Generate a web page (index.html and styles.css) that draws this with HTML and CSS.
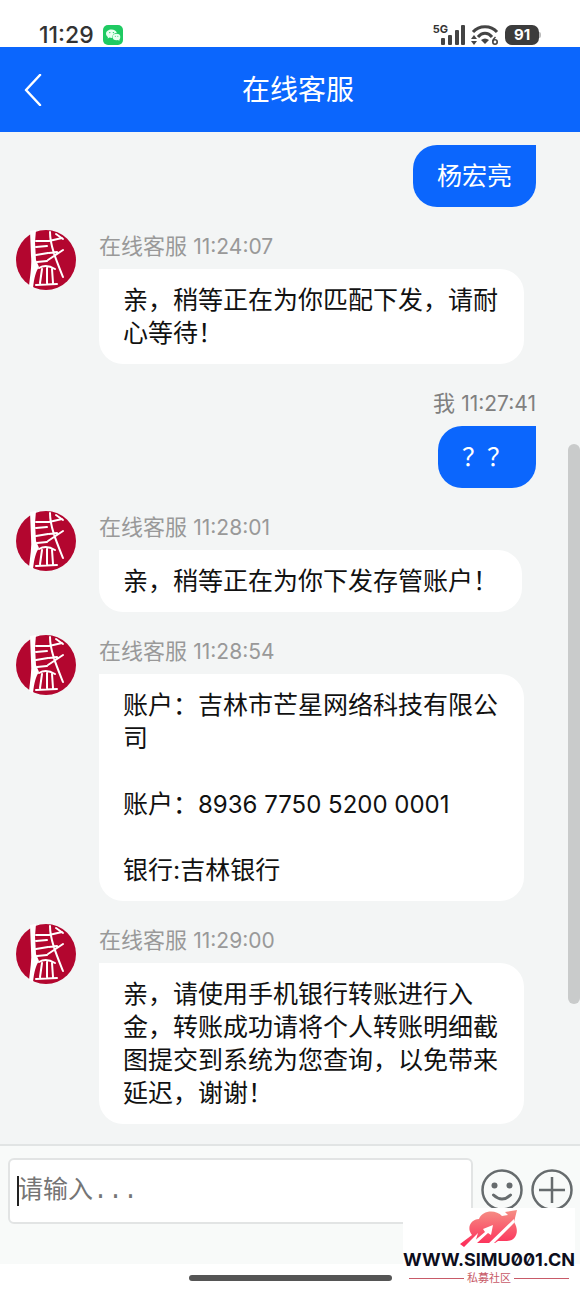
FILE: index.html
```html
<!DOCTYPE html>
<html lang="zh-CN">
<head>
<meta charset="utf-8">
<meta name="viewport" content="width=device-width, initial-scale=1">
<title>在线客服</title>
<link rel="stylesheet" href="styles.css">
</head>
<body>
<svg class="defs" aria-hidden="true">
  <symbol id="seal" viewBox="0 0 60 60">
    <circle cx="30" cy="30" r="30" fill="#b3062f"/>
    <g fill="none" stroke="#fff" stroke-linecap="round" stroke-linejoin="round">
      <path fill="#fff" stroke="none" d="M14 1L20 0L19 12L20 30L23 37C20 41 18 48 17 58L13 56C14 46 16 36 15 26Z"/>
      <path stroke-width="2" d="M20 11L33 11L46 8M40 4L47 9"/>
      <path stroke-width="2" d="M20 17L31 16M20 25L32 23M21 32L31 31"/>
      <path stroke-width="2" d="M34 2C34 16 41 32 47 47M47 20L32 30M33 23L41 22"/>
      <path stroke-width="2" d="M23 38C28 35 34 36 39 39M26 39L24 53M31 38L31 53M36 39L37 53M20 55L41 54"/>
    </g>
  </symbol>
</svg>

<header class="status">
  <time class="clock">11:29</time>
  <svg class="wechat" viewBox="0 0 20 20" aria-hidden="true">
    <rect width="20" height="20" rx="5" fill="#1fca62"/>
    <path fill="#e9fff0" d="M8.500 4.500C5.500 4.500 3 6.300 3 8.700C3 10.100 3.800 11.200 5 12L4.600 13.600L6.500 12.600C8 13 9 12.900 9.500 12.800C9 9.800 11.500 8 13.800 8C13.400 6 11.200 4.500 8.500 4.500Z"/>
    <ellipse cx="13.500" cy="12" rx="3.800" ry="3.200" fill="#e9fff0"/>
    <path fill="#e9fff0" d="M14 14L16.300 16L16.300 13Z"/>
    <g fill="#1fca62"><circle cx="6.800" cy="7.600" r=".7"/><circle cx="10.400" cy="7.600" r=".7"/><circle cx="12.300" cy="11.300" r=".5"/><circle cx="14.800" cy="11.300" r=".5"/></g>
  </svg>
  <div class="radios">
    <span class="net">5G</span>
    <svg class="signal" viewBox="0 0 26 20" aria-hidden="true" fill="#444"><rect x="1" y="13" width="4" height="7" rx="1"/><rect x="8" y="10" width="4" height="10" rx="1"/><rect x="15" y="5" width="4" height="15" rx="1"/><rect x="21" y="0" width="4" height="20" rx="1"/></svg>
    <svg class="wifi" viewBox="0 0 28 20" aria-hidden="true">
      <g fill="none" stroke="#444" stroke-width="3"><path d="M2 7C8 0 20 0 26 7"/><path d="M7 12C11 7 17 7 21 12"/></g>
      <path fill="#444" d="M10 15Q14 12 18 15L14 19ZM0 14L3 10L6 14ZM0 16L3 20L6 16Z"/>
      <path fill="none" stroke="#444" stroke-width="1.600" d="M24.500 12Q22 14 21.700 16.500"/><circle cx="24" cy="17" r="2.200" fill="none" stroke="#444" stroke-width="1.600"/>
    </svg>
    <span class="battery">91</span>
    <span class="nub"></span>
  </div>
</header>

<nav class="titlebar">
  <button class="back" type="button" aria-label="返回">
    <svg viewBox="0 0 18 32" aria-hidden="true"><path d="M16 1L2 16L16 31" fill="none" stroke="#fff" stroke-width="2.500" stroke-linecap="round" stroke-linejoin="round"/></svg>
  </button>
  <h1 class="title">在线客服</h1>
</nav>

<main class="chat">
  <article class="mine"><p class="bubble">杨宏亮</p></article>

  <article class="theirs">
    <svg class="avatar" role="img" aria-label="在线客服"><use href="#seal"/></svg>
    <div class="body">
      <div class="meta">在线客服 <time>11:24:07</time></div>
      <p class="bubble">亲，稍等正在为你匹配下发，请耐心等待！</p>
    </div>
  </article>

  <article class="mine">
    <div class="meta">我 <time>11:27:41</time></div>
    <p class="bubble">？？</p>
  </article>

  <article class="theirs">
    <svg class="avatar" role="img" aria-label="在线客服"><use href="#seal"/></svg>
    <div class="body">
      <div class="meta">在线客服 <time>11:28:01</time></div>
      <p class="bubble">亲，稍等正在为你下发存管账户！</p>
    </div>
  </article>

  <article class="theirs">
    <svg class="avatar" role="img" aria-label="在线客服"><use href="#seal"/></svg>
    <div class="body">
      <div class="meta">在线客服 <time>11:28:54</time></div>
      <p class="bubble">账户：吉林市芒星网络科技有限公司<br><br>账户：<span class="number">8936 7750 5200 0001</span><br><br>银行:吉林银行</p>
    </div>
  </article>

  <article class="theirs">
    <svg class="avatar" role="img" aria-label="在线客服"><use href="#seal"/></svg>
    <div class="body">
      <div class="meta">在线客服 <time>11:29:00</time></div>
      <p class="bubble">亲，请使用手机银行转账进行入金，转账成功请将个人转账明细截图提交到系统为您查询，以免带来延迟，谢谢！</p>
    </div>
  </article>
</main>

<form class="composer">
  <div class="field">
    <input class="entry" type="text" placeholder="请输入..." aria-label="请输入">
    <span class="caret"></span>
  </div>
  <button class="tool" type="button" aria-label="表情">
    <svg viewBox="0 0 42 42" aria-hidden="true"><circle cx="21" cy="21" r="19.500" fill="none" stroke="#666b6d" stroke-width="2.500"/><circle cx="13.500" cy="16.500" r="3" fill="#666b6d"/><circle cx="28.500" cy="16.500" r="3" fill="#666b6d"/><path d="M12.500 26Q21 34 29.500 26" fill="none" stroke="#666b6d" stroke-width="3" stroke-linecap="round"/></svg>
  </button>
  <button class="tool" type="button" aria-label="更多">
    <svg viewBox="0 0 42 42" aria-hidden="true"><circle cx="21" cy="21" r="19.500" fill="none" stroke="#666b6d" stroke-width="2.500"/><path d="M21 8V34M8 21H34" fill="none" stroke="#666b6d" stroke-width="2.500"/></svg>
  </button>
</form>

<footer class="home"><span class="handle"></span></footer>

<div class="scrollbar"></div>

<aside class="stamp">
  <svg class="cloud" viewBox="0 0 58 38" aria-hidden="true">
    <defs><linearGradient id="rose" gradientUnits="userSpaceOnUse" x1="0" y1="0" x2="0" y2="37"><stop offset="0" stop-color="#f58f85"/><stop offset="1" stop-color="#fd2a58"/></linearGradient></defs>
    <path fill="url(#rose)" d="M0 34L12 25C6 18 11 9 19 9C22 0 36-1 42 6L48 5L45 2L57 0L54 12C60 21 56 31 47 31L38 31L35 33L15 33L18 23L4 37Z"/>
    <path fill="#fff" d="M7 37L25 22L23 19L33 15L31 25L28 23L17 33L12 37ZM26 36L54 9L54 13L37 30L31 36Z"/>
  </svg>
  <div class="site">WWW.SIMU001.CN</div>
  <div class="tagline">私募社区</div>
</aside>
</body>
</html>
```
FILE: styles.css
```css
* { box-sizing: border-box; }

body {
  position: relative;
  display: flex;
  flex-direction: column;
  min-height: 100vh;
  margin: 0;
  background: #fff;
  color: #111;
  font-family: Inter, "Noto Sans CJK SC", sans-serif;
  font-size: 25px;
  line-height: 33px;
}

button { padding: 0; border: 0; background: none; cursor: pointer; }
svg { display: block; }
.defs { position: absolute; width: 0; height: 0; }

/* Status bar */
.status {
  display: flex;
  align-items: flex-end;
  height: 47px;
  padding: 0 39px 2px;
  color: #333;
}
.clock { font-size: 23px; font-weight: 500; line-height: 20px; }
.wechat { width: 20px; height: 20px; margin-left: 9px; }
.radios { display: flex; align-items: flex-end; margin-left: auto; }
.net { align-self: flex-start; font-size: 11px; font-weight: 700; line-height: 8px; }
.signal { width: 26px; height: 20px; margin-left: -8px; }
.wifi { width: 28px; height: 20px; margin: 0 6px 0 5px; }
.battery {
  width: 34px;
  border-radius: 7px;
  background: #3c3c3c;
  color: #fff;
  font-size: 15px;
  font-weight: 700;
  line-height: 20px;
  text-align: center;
}
.nub { align-self: center; width: 2px; height: 6px; border-radius: 0 2px 2px 0; background: #bbb; }

/* Title bar */
.titlebar {
  display: grid;
  grid-template-columns: 48px 1fr 48px;
  align-items: center;
  height: 85px;
  padding-left: 16px;
  background: #0b66fd;
  color: #fff;
}
.back { display: flex; padding: 8px; }
.back svg { width: 18px; height: 32px; }
.title { margin: 0; font-size: 28px; font-weight: 400; line-height: 34px; text-align: center; }

/* Conversation */
.chat {
  display: flex;
  flex: 1;
  flex-direction: column;
  gap: 23px;
  padding: 13px 44px 20px 16px;
  background: #f3f5f5;
}
.mine { display: flex; flex-direction: column; align-items: flex-end; }
.theirs { display: flex; gap: 23px; padding-right: 12px; }
.avatar { flex: none; width: 60px; height: 60px; }
.body { flex: 1; min-width: 0; }
.meta { margin-bottom: 6px; color: #999; font-size: 22px; line-height: 33px; }
.mine .meta { color: #808080; }
.meta time { font-size: 21px; }
.bubble {
  width: fit-content;
  margin: 0;
  padding: 15px 24px 14px;
  border-radius: 0 24px 24px 24px;
  background: #fff;
}
.mine .bubble { border-radius: 24px 0 24px 24px; background: #0b66fd; color: #fff; }
.number { font-size: 24px; }

/* Composer */
.composer {
  display: flex;
  align-items: flex-start;
  gap: 8px;
  height: 120px;
  padding: 12px 7px 0 8px;
  border-top: 2px solid #e1e4e4;
  background: #f8faf9;
}
.field { position: relative; flex: 1; }
.entry {
  display: block;
  width: 100%;
  height: 66px;
  padding: 0 8px;
  border: 2px solid #e2e4e4;
  border-radius: 6px;
  background: #fff;
  font-family: "Liberation Mono", "Noto Sans CJK SC", monospace;
  font-size: 25px;
}
.entry::placeholder { color: #757575; opacity: 1; }
.caret { position: absolute; top: 18px; left: 9px; width: 2px; height: 30px; background: #222; }
.tool { flex: none; margin-top: 11px; }
.tool svg { width: 42px; height: 42px; }

.home { display: flex; justify-content: center; height: 27px; padding-top: 11px; }
.handle { width: 35%; height: 6px; border-radius: 3px; background: #555; }

/* Overlays */
.scrollbar {
  position: absolute;
  top: 444px;
  right: 0;
  width: 12px;
  height: 560px;
  border-radius: 6px;
  background: #c9cbcb;
}
.stamp {
  position: absolute;
  right: 5px;
  bottom: 0;
  width: 172px;
  height: 83px;
  background: #fff;
}
.cloud { width: 58px; height: 38px; margin: 2px auto 0; }
.site {
  display: flex;
  justify-content: center;
  color: #0d0d1c;
  font-size: 18px;
  font-weight: 700;
  font-variant-numeric: slashed-zero;
  line-height: 24px;
}
.tagline {
  display: flex;
  align-items: center;
  gap: 3px;
  padding: 0 6px;
  color: #c85a68;
  font-size: 11px;
  line-height: 12px;
}
.tagline::before, .tagline::after { flex: 1; height: 1px; background: #c85a68; content: ""; }
```
